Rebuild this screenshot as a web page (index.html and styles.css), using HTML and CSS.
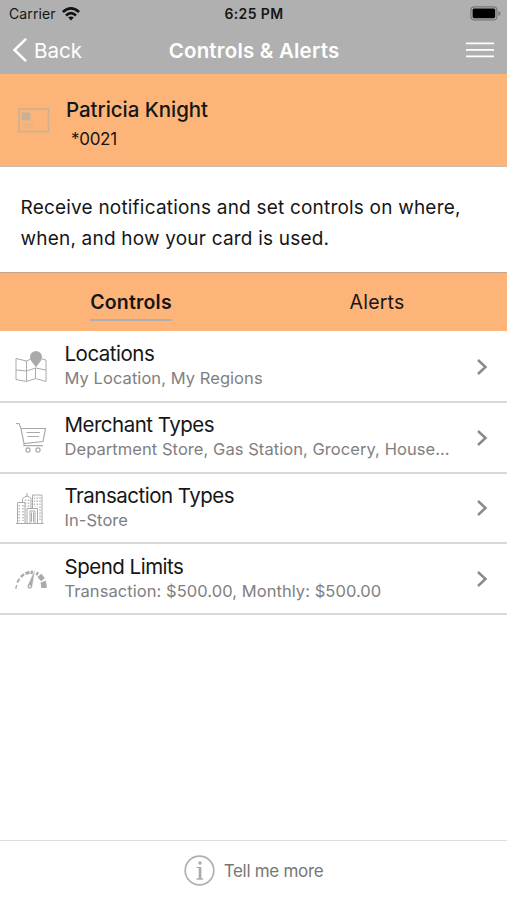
FILE: index.html
```html
<!DOCTYPE html>
<html lang="en">
<head>
<meta charset="utf-8">
<title>Controls &amp; Alerts</title>
<link rel="stylesheet" href="styles.css">
</head>
<body>
<div class="app">
  <header class="header">
    <div class="status">
      <div class="carrier"><span>Carrier</span>
        <svg width="18" height="14" viewBox="0 0 18 14"><g fill="none" stroke="#111" stroke-width="2.7"><path d="M.9 5.1Q9-2.2 17.1 5.1"/><path d="M4 8.4Q9 4 14 8.4"/></g><path d="M6.2 10.6Q9 8.5 11.8 10.6L9 13.4Z" fill="#111"/></svg>
      </div>
      <div class="time">6:25 PM</div>
      <svg class="battery" width="31" height="15" viewBox="0 0 31 15"><rect x=".9" y=".9" width="26" height="13" rx="3.5" fill="none" stroke="#777" stroke-width="1.2"/><rect x="2.6" y="2.6" width="22.6" height="9.6" rx="1.6" fill="#000"/><path d="M28.3 5Q30.4 5.5 30.4 7.5T28.3 10Z" fill="#777"/></svg>
    </div>
    <nav class="nav">
      <div class="back"><svg width="15" height="26" viewBox="0 0 15 26"><path d="M14 1.8 2.5 13 14 24.2" fill="none" stroke="#fff" stroke-width="2.5"/></svg><span>Back</span></div>
      <h1 class="title">Controls &amp; Alerts</h1>
      <svg class="menu" width="28" height="16" viewBox="0 0 28 16"><path d="M0 1.3H28M0 7.8H28M0 14.3H28" stroke="#fff" stroke-width="1.8"/></svg>
    </nav>
  </header>

  <section class="card">
    <svg width="32" height="25" viewBox="0 0 32 25"><rect x="1" y="1" width="29.5" height="22.5" fill="none" stroke="#cdb191" stroke-width="1.8"/><rect x="3.5" y="4.5" width="9" height="8" fill="#c5b19a"/><path d="M4 16.2H16M4 19H15" stroke="#dfb184" stroke-width="1"/></svg>
    <div class="holder"><div class="name">Patricia Knight</div><div class="number">*0021</div></div>
  </section>

  <p class="intro">Receive notifications and set controls on where, <br>when, and how your card is used.</p>

  <div class="tabs">
    <div class="tab active"><span>Controls</span></div>
    <div class="tab"><span>Alerts</span></div>
  </div>

  <main class="list">
    <div class="row">
      <svg class="icon" viewBox="0 0 34 34"><g fill="none" stroke="#aaa" stroke-width="1"><path d="M2 8.5 12.5 11 17 9M2 8.5V29.5L12.5 31.5 21.5 28.5 32 31.5V10L28 9M12.5 11V31.5M21.5 18V28.5M2 20 12.5 21 21.5 18 32 20"/></g><path d="M22 17.5C19.7 13.5 16 11 16 7A6 6 0 0 1 28 7C28 11 24.3 13.5 22 17.5Z" fill="#aaa"/></svg>
      <div class="text"><div class="label">Locations</div><div class="detail">My Location, My Regions</div></div>
      <svg class="chevron" viewBox="0 0 12 18"><path d="M2 2 9.5 9 2 16"/></svg>
    </div>
    <div class="row">
      <svg class="icon" viewBox="0 0 34 34"><g fill="none" stroke="#aaa" stroke-width="1.2"><path d="M2 2.5H5L7 7.5H31.5L29 20.5L10 22.5L7 7.5M10 22.5V24.7H29"/><path d="M12.5 11.5H26M13.5 15.5H25" stroke-width="1"/><circle cx="14" cy="29" r="2.1"/><circle cx="24" cy="29" r="2.1"/></g></svg>
      <div class="text"><div class="label">Merchant Types</div><div class="detail">Department Store, Gas Station, Grocery, House...</div></div>
      <svg class="chevron" viewBox="0 0 12 18"><path d="M2 2 9.5 9 2 16"/></svg>
    </div>
    <div class="row">
      <svg class="icon" viewBox="0 0 34 34"><g fill="none" stroke="#aaa" stroke-width="1"><path d="M2 32.5H29.5M3.5 32V11.5H11V32M8.5 11V8Q10 5.5 13 5Q16 5.5 17 8V17M13 2V5M18.5 17V4H28V32M13 32V17.5H23.5V32M16 32V20H21V32"/><path d="M5.3 14V30M9 14V30M11.5 8.5V16M14.5 8.5V16M20.5 6.5V16M23.3 6.5V16M26 6.5V30" stroke="#bbb" stroke-width="1.5" stroke-dasharray="1.5 1.5"/><path d="M17.5 21.5V31M19.5 21.5V31" stroke-width="1"/></g></svg>
      <div class="text"><div class="label">Transaction Types</div><div class="detail">In-Store</div></div>
      <svg class="chevron" viewBox="0 0 12 18"><path d="M2 2 9.5 9 2 16"/></svg>
    </div>
    <div class="row">
      <svg class="icon" viewBox="0 0 34 34"><g fill="none" stroke="#aaa"><path d="M1.8 27 2.6 23" stroke-width="1.3"/><path d="M3.2 20.5 5.5 16.7" stroke-width="1.9"/><path d="M6.8 15 10 12.2" stroke-width="2.4"/><path d="M11.5 11.6 15.5 10.3" stroke-width="3"/><path d="M16.5 10.3 19 10.5M22.3 11 24.2 12.2" stroke-width="3.5"/><path d="M25.3 13.3 29 17.6" stroke-width="5"/><path d="M29 19.6Q30 22 30 26" stroke-width="5.6"/></g><path d="M21.3 6.5 18.3 25A2.5 2.5 0 0 1 13.5 23.5Z" fill="#aaa" stroke="#fff" stroke-width=".5"/><circle cx="15.8" cy="24.2" r=".9" fill="#fff"/></svg>
      <div class="text"><div class="label">Spend Limits</div><div class="detail">Transaction: $500.00, Monthly: $500.00</div></div>
      <svg class="chevron" viewBox="0 0 12 18"><path d="M2 2 9.5 9 2 16"/></svg>
    </div>
  </main>

  <footer class="footer">
    <svg width="31" height="31" viewBox="0 0 31 31"><circle cx="15.5" cy="15.5" r="14.3" fill="none" stroke="#b0b0b0" stroke-width="1.7"/><circle cx="16" cy="8" r="1.7" fill="#aaa"/><path d="M12.5 12.5H16.5V23.5" fill="none" stroke="#aaa" stroke-width="1.2"/><path d="M16 12.5V24" stroke="#aaa" stroke-width="2.6"/><path d="M12.5 24H19" stroke="#aaa" stroke-width="1.4"/></svg>
    <span>Tell me more</span>
  </footer>
</div>
</body>
</html>
```
FILE: styles.css
```css
* { box-sizing: border-box; }
body { margin: 0; background: #fff; font-family: Inter, "Liberation Sans", sans-serif; color: #161616; }
svg { display: block; flex: none; }
.app { width: 507px; height: 900px; display: flex; flex-direction: column; overflow: hidden; white-space: nowrap; }

.header { height: 74px; background: #b0b0b0; }
.status { height: 27px; display: grid; grid-template-columns: 1fr auto 1fr; align-items: center; padding: 0 6px 0 9px; font-size: 14px; }
.carrier { display: flex; align-items: center; gap: 6px; letter-spacing: .1px; }
.time { font-weight: 600; letter-spacing: .4px; margin-right: 2px; }
.battery { justify-self: end; }
.nav { height: 46px; display: grid; grid-template-columns: 1fr auto 1fr; align-items: center; padding: 0 13px 0 14px; color: #fff; }
.back { display: flex; align-items: center; gap: 7px; font-size: 20.5px; margin-left: -2px; }
.title { margin: 0; font-size: 20.5px; font-weight: 600; letter-spacing: .2px; }
.menu { justify-self: end; }

.card { height: 93px; background: #fdb478; border-bottom: 1px solid #cbbcae; display: flex; align-items: center; gap: 16px; padding: 0 18px; }
.holder { padding-top: 9px; }
.name { font-size: 20.5px; line-height: 28px; font-weight: 500; letter-spacing: -.05px; }
.number { font-size: 17px; line-height: 29px; padding-left: 5px; padding-top: 1px; letter-spacing: -.3px; }

.intro { margin: 0; height: 105px; padding: 25px 20.5px 0; font-size: 19px; line-height: 31px; letter-spacing: .2px; }

.tabs { height: 59px; background: #fdb478; border-top: 1.5px solid #c3a58a; display: grid; grid-template-columns: 262px 230px; justify-items: center; font-size: 19.5px; letter-spacing: .2px; }
.tab { height: 48px; padding-top: 17px; line-height: 24px; border-bottom: 2px solid transparent; }
.active { font-weight: 600; border-color: #b0afb0; }

.list { display: flex; flex-direction: column; padding-top: 1px; }
.row { height: 70.8px; border-bottom: 2px solid #d9d9d9; display: flex; align-items: center; padding: 1px 19px 0 14px; }
.icon { width: 34px; height: 34px; }
.text { flex: 1; padding: 0 0 2px 16.5px; }
.label { font-size: 20.5px; line-height: 25px; letter-spacing: -.5px; }
.detail { font-size: 16.5px; line-height: 24px; letter-spacing: .06px; color: #808080; }
.chevron { width: 12px; height: 18px; fill: none; stroke: #8a8a8a; stroke-width: 2.5; }

.footer { margin-top: auto; height: 60px; border-top: 1.5px solid #dedede; display: flex; align-items: center; justify-content: center; gap: 9px; font-size: 17px; letter-spacing: -.3px; color: #777; }
```
